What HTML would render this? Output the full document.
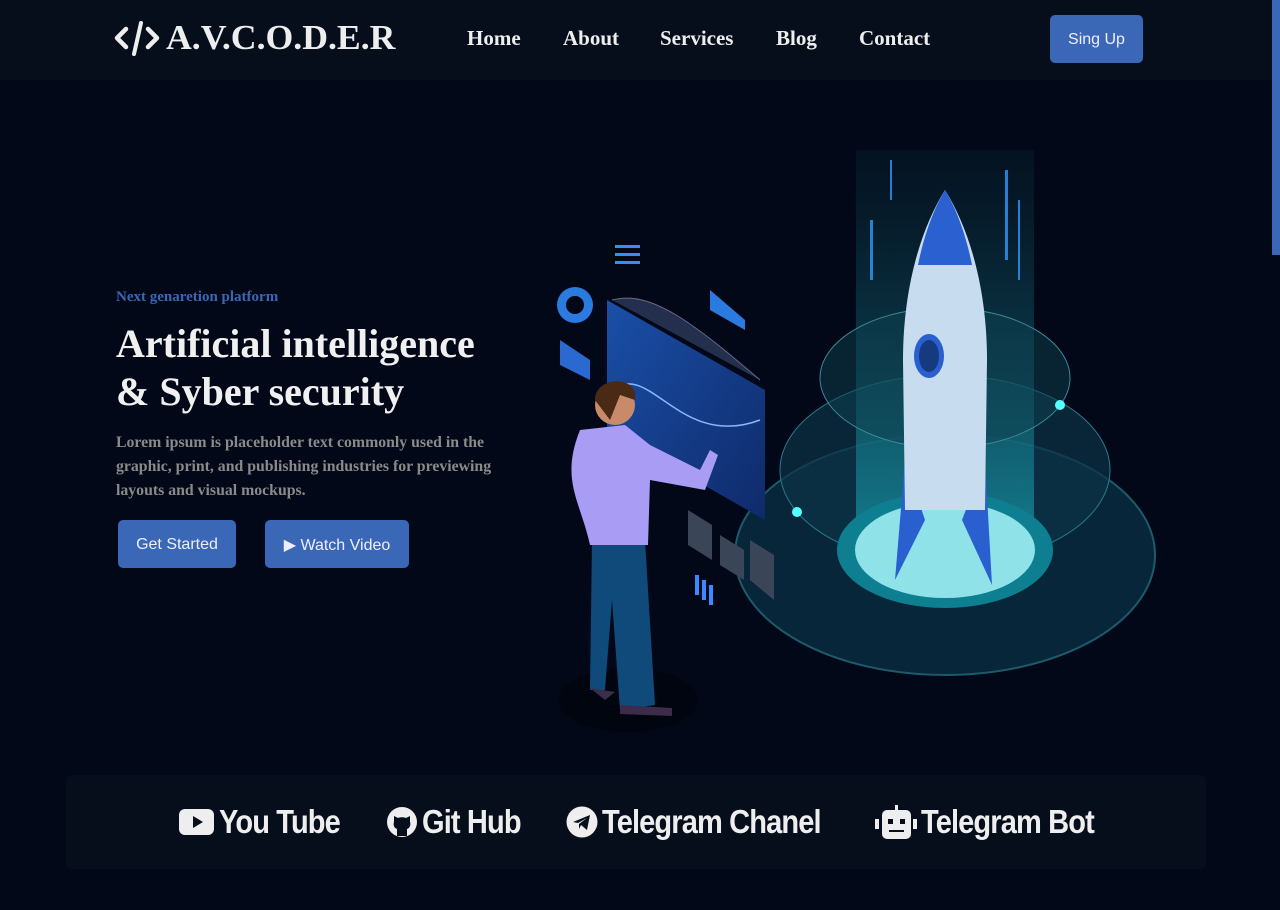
<!DOCTYPE html>
<html><head><meta charset="utf-8"><style>
*{margin:0;padding:0;box-sizing:border-box}
body{width:1280px;height:910px;background:#020817;overflow:hidden;font-family:"Liberation Serif",serif;position:relative}
header{position:absolute;left:0;top:0;width:1280px;height:80px;background:#060d1b}
.logo{position:absolute;left:114px;top:18px;color:#eee;font-weight:bold;font-size:35px;display:flex;align-items:center;gap:6px}
.logo span{display:inline-block;transform:scaleX(1.02);transform-origin:left}
nav a{position:absolute;top:26px;color:#eee;font-weight:bold;font-size:21px;text-decoration:none}
.btn{position:absolute;background:#3a67b6;color:#eef;font-family:"Liberation Sans",sans-serif;font-size:16px;border-radius:5px;display:flex;align-items:center;justify-content:center;padding-top:2px}
.scroll{position:absolute;right:0;top:0;width:8px;height:255px;background:#3a67b6}
.sub{position:absolute;left:116px;top:289px;color:#3a67b6;font-weight:bold;font-size:15px}
h1{position:absolute;left:116px;top:320px;color:#f0f0f0;font-size:40px;line-height:48px;font-weight:bold;white-space:nowrap}
.p{position:absolute;left:116px;top:431px;width:410px;color:#8a8a8a;font-weight:bold;font-size:15.8px;line-height:24px}
.bar{position:absolute;left:66px;top:775px;width:1140px;height:94px;background:#060d1b;border-radius:6px}
.lk{position:absolute;top:803px;display:flex;align-items:center;gap:4px;color:#eee}
.lk span{font-family:"Liberation Sans",sans-serif;font-weight:bold;font-size:33px;display:inline-block;transform:scaleX(.88);transform-origin:left center;letter-spacing:-1px}
</style></head><body>
<header>
<div class="logo"><svg width="46" height="36" viewBox="0 0 46 36"><path d="M12 9 L3 18 L12 27 M34 9 L43 18 L34 27" stroke="#eee" stroke-width="4.5" fill="none" stroke-linecap="round" stroke-linejoin="round"/><path d="M27 3 L20 34" stroke="#eee" stroke-width="4" stroke-linecap="round"/></svg><span>A.V.C.O.D.E.R</span></div>
<nav><a style="left:467px">Home</a><a style="left:563px">About</a><a style="left:660px">Services</a><a style="left:776px">Blog</a><a style="left:859px">Contact</a></nav>
<div class="btn" style="left:1050px;top:15px;width:93px;height:48px">Sing Up</div>
</header>
<div class="scroll"></div>
<div class="sub">Next genaretion platform</div>
<h1>Artificial intelligence<br>&amp; Syber security</h1>
<div class="p">Lorem ipsum is placeholder text commonly used in the graphic, print, and publishing industries for previewing layouts and visual mockups.</div>
<div class="btn" style="left:118px;top:520px;width:118px;height:48px">Get Started</div>
<div class="btn" style="left:265px;top:520px;width:144px;height:48px">&#9654;&nbsp;Watch Video</div>

<svg style="position:absolute;left:550px;top:140px" width="620" height="600" viewBox="550 140 620 600">
<defs><linearGradient id="beam" x1="0" y1="0" x2="0" y2="1"><stop offset="0" stop-color="#0d3a4a" stop-opacity=".2"/><stop offset="1" stop-color="#19a0b0" stop-opacity=".7"/></linearGradient>
<linearGradient id="scr" x1="0" y1="0" x2="1" y2="1"><stop offset="0" stop-color="#1a4fa8"/><stop offset="1" stop-color="#0f2a6a"/></linearGradient></defs>
<ellipse cx="945" cy="555" rx="210" ry="120" fill="#08263a" stroke="#1d5a6a" stroke-width="2"/>
<ellipse cx="945" cy="470" rx="165" ry="95" fill="#0b3346" fill-opacity=".7" stroke="#2a7a8a"/>
<rect x="856" y="150" width="178" height="400" fill="url(#beam)"/>
<ellipse cx="945" cy="378" rx="125" ry="70" fill="#0e4050" fill-opacity=".5" stroke="#3a8a9a"/>
<ellipse cx="945" cy="550" rx="108" ry="58" fill="#0e7f90"/>
<ellipse cx="945" cy="550" rx="90" ry="48" fill="#8fe3e8"/>
<path d="M905 460 L895 580 L925 520 Z M985 460 L992 585 L962 520 Z" fill="#2a5fd0"/>
<path d="M945 190 C920 230 903 290 903 360 L905 510 L985 510 L987 360 C987 290 970 230 945 190 Z" fill="#c8dcf0"/>
<path d="M945 190 C930 215 922 245 918 265 L972 265 C968 245 960 215 945 190Z" fill="#2a60d0"/>
<ellipse cx="929" cy="356" rx="15" ry="22" fill="#2a5fd0"/><ellipse cx="929" cy="356" rx="10" ry="16" fill="#163a80"/>
<circle cx="1060" cy="405" r="5" fill="#5ff"/><circle cx="797" cy="512" r="5" fill="#5ff"/>
<g fill="#2e9aff" opacity=".8"><rect x="870" y="220" width="3" height="60"/><rect x="1005" y="170" width="3" height="90"/><rect x="890" y="160" width="2" height="40"/><rect x="1018" y="200" width="2" height="80"/></g>
<ellipse cx="628" cy="700" rx="70" ry="32" fill="#010510"/>
<path d="M607 300 L765 390 L765 520 L607 430Z" fill="url(#scr)"/>
<path d="M612 390 C650 360 680 450 760 420" stroke="#8ab6ff" fill="none" stroke-width="1.5"/>
<path d="M612 300 C650 290 690 320 760 380" stroke="#aac" fill="#3a4a70" opacity=".6"/>
<circle cx="575" cy="305" r="18" fill="#2a7ae0"/><circle cx="575" cy="305" r="9" fill="#020817"/>
<path d="M560 340 L590 360 L590 380 L560 365Z" fill="#2a6ad0"/>
<g fill="#3a8aff"><rect x="615" y="245" width="25" height="3"/><rect x="615" y="253" width="25" height="3"/><rect x="615" y="261" width="25" height="3"/><rect x="695" y="575" width="4" height="20"/><rect x="702" y="580" width="4" height="20"/><rect x="709" y="585" width="4" height="20"/></g>
<path d="M710 290 L745 320 L745 330 L710 310Z" fill="#2a7ae0"/>
<path d="M688 510 L712 525 L712 560 L688 545Z M720 535 L744 550 L744 580 L720 565Z M750 540 L774 555 L774 600 L750 580Z" fill="#3a4558"/>
<path d="M592 540 L645 540 L655 705 L620 710 L612 600 L605 690 L590 690Z" fill="#0f4a7a"/>
<path d="M580 430 L625 425 L650 445 L700 470 L710 450 L718 455 L705 490 L650 480 L648 545 L590 545 C580 500 560 480 580 430Z" fill="#a89cf4"/>
<circle cx="615" cy="405" r="20" fill="#c98a6a"/><path d="M595 400 C595 375 640 375 635 400 L620 395 L610 420 Z" fill="#4a2a14"/>
<path d="M620 705 L672 708 L672 716 L620 714Z M590 688 L615 692 L605 700Z" fill="#3c2c4a"/>
</svg>

<div class="bar"></div>
<div class="lk" style="left:179px"><svg width="36" height="26" viewBox="0 0 36 26"><rect width="35" height="26" rx="6" fill="#eee"/><path d="M14 7 L24 13 L14 19Z" fill="#060d1b"/></svg><span>You Tube</span></div>
<div class="lk" style="left:386px"><svg width="32" height="32" viewBox="0 0 32 32"><circle cx="16" cy="16" r="15" fill="#eee"/><path d="M11 30 L11 23 C8 22 7 19 8 16 L8 10 L12 12 C14 11 18 11 20 12 L24 10 L24 16 C25 19 24 22 21 23 L21 30Z" fill="#060d1b"/></svg><span>Git Hub</span></div>
<div class="lk" style="left:566px"><svg width="32" height="32" viewBox="0 0 32 32"><circle cx="16" cy="16" r="15.5" fill="#eee"/><path d="M7 16 L24 9 L21 24 L15 19 L13 23 L13 18 L21 12 L12 17Z" fill="#060d1b"/></svg><span>Telegram Chanel</span></div>
<div class="lk" style="left:875px"><svg width="42" height="34" viewBox="0 0 42 34"><rect x="20" y="0" width="3" height="6" fill="#eee"/><rect x="7" y="5" width="29" height="29" rx="5" fill="#eee"/><rect x="0" y="14" width="4" height="10" fill="#eee"/><rect x="38" y="14" width="4" height="10" fill="#eee"/><rect x="13" y="14" width="5" height="5" fill="#060d1b"/><rect x="25" y="14" width="5" height="5" fill="#060d1b"/><rect x="14" y="25" width="15" height="2" fill="#060d1b"/></svg><span>Telegram Bot</span></div>
</body></html>
